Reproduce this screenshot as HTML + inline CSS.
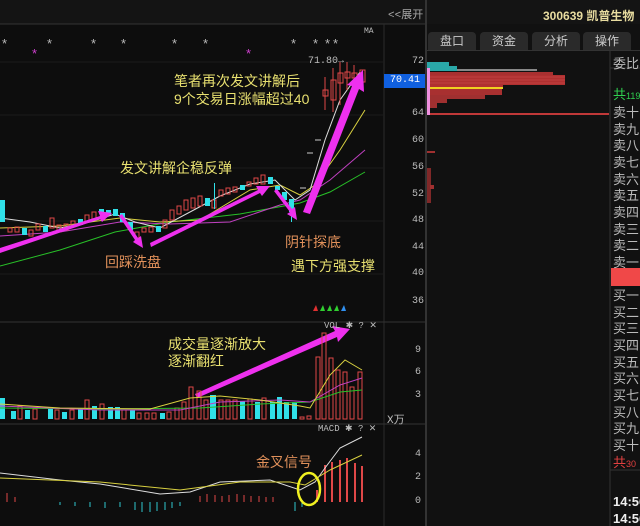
<!DOCTYPE html>
<html><head><meta charset="utf-8"><style>
body{margin:0;width:640px;height:526px;background:#0e0e0e;overflow:hidden;position:relative;font-family:"Liberation Sans","Noto Sans CJK SC",sans-serif}
.t{position:absolute;white-space:nowrap}
.y{color:#e8e070;font-size:14px}
.o{color:#e0905a;font-size:14px}
.ax{color:#bbb;font-size:10px;font-family:"Liberation Mono",monospace}
.r{color:#bbb;font-size:13px;left:613px}
.tab{position:absolute;top:32px;height:18px;width:48px;background:#2a2a2a;border-radius:4px 4px 0 0;color:#ccc;font-size:12px;text-align:center;line-height:18px}
</style></head><body>
<svg width="640" height="526" style="position:absolute;left:0;top:0">
<rect x="0" y="0" width="640" height="24" fill="#141414"/>
<rect x="0" y="24" width="425" height="502" fill="#0d0d0d"/>
<line x1="0" y1="24" x2="425" y2="24" stroke="#333"/>
<line x1="426" y1="0" x2="426" y2="526" stroke="#333" stroke-width="2"/>
<line x1="384" y1="24" x2="384" y2="526" stroke="#2a2a2a"/>
<line x1="0" y1="322" x2="425" y2="322" stroke="#333"/>
<line x1="0" y1="424" x2="425" y2="424" stroke="#333"/>
<g stroke="#1c1c1c">
<line x1="0" y1="62" x2="384" y2="62"/><line x1="0" y1="115" x2="384" y2="115"/><line x1="0" y1="168" x2="384" y2="168"/><line x1="0" y1="221" x2="384" y2="221"/><line x1="0" y1="274" x2="384" y2="274"/>
</g>
<rect x="427" y="24" width="213" height="502" fill="#111"/>
<rect x="427" y="50" width="213" height="1" fill="#333"/>
<line x1="610" y1="51" x2="610" y2="526" stroke="#333"/>
<line x1="610" y1="68" x2="640" y2="68" stroke="#333"/>
<line x1="610" y1="470" x2="640" y2="470" stroke="#333"/>
<rect x="611" y="268" width="29" height="18" fill="#f04848"/>
<rect x="427" y="62" width="22" height="4" fill="#2aa8a8"/>
<rect x="427" y="66" width="30" height="5" fill="#2aa8a8"/>
<rect x="457" y="69" width="80" height="2" fill="#888"/>
<rect x="427" y="72" width="126" height="3" fill="#a83030"/>
<rect x="427" y="75" width="138" height="10" fill="#b03030"/>
<g stroke="#d05050" stroke-width="0.5"><line x1="430" y1="77" x2="565" y2="77"/><line x1="430" y1="80" x2="565" y2="80"/><line x1="430" y1="83" x2="565" y2="83"/></g>
<rect x="427" y="85" width="76" height="2" fill="#b03030"/>
<rect x="427" y="87" width="76" height="2" fill="#f0d020"/>
<rect x="427" y="89" width="75" height="6" fill="#a83030"/>
<rect x="427" y="95" width="58" height="4" fill="#a03030"/>
<rect x="427" y="99" width="20" height="4" fill="#a03030"/>
<rect x="427" y="103" width="10" height="5" fill="#a03030"/>
<rect x="427" y="113" width="182" height="2" fill="#c03838"/>
<rect x="427" y="68" width="3" height="47" fill="#f090e0"/>
<rect x="427" y="151" width="8" height="2" fill="#a03030"/>
<rect x="427" y="168" width="4" height="35" fill="#802828"/>
<rect x="430" y="185" width="4" height="4" fill="#a03030"/>
<g fill="#bbb" font-size="13" font-family="Liberation Sans">
<text x="2" y="48">*</text><text x="47" y="48">*</text><text x="91" y="48">*</text><text x="121" y="48">*</text><text x="172" y="48">*</text><text x="203" y="48">*</text><text x="291" y="48">*</text><text x="313" y="48">*</text><text x="325" y="48">*</text><text x="333" y="48">*</text></g>
<g fill="#d040d0" font-size="13"><text x="32" y="58">*</text><text x="246" y="58">*</text></g>
<polyline fill="none" stroke="#28c028" stroke-width="1" points="0,266 60,250 115,232 170,222 240,214 300,203 330,192 365,172"/>
<polyline fill="none" stroke="#c040c0" stroke-width="1" points="0,236 60,232 120,222 170,224 230,222 280,205 300,200 330,180 365,150"/>
<polyline fill="none" stroke="#d8d040" stroke-width="1" points="0,228 60,226 120,218 160,222 200,220 250,190 280,185 300,195 315,185 340,150 365,110"/>
<polyline fill="none" stroke="#ddd" stroke-width="1" points="0,218 30,222 60,228 90,222 115,214 135,222 160,228 190,212 220,196 250,184 275,180 295,200 310,190 325,140 340,100 360,72"/>
<g stroke="#e04848" fill="none" stroke-width="1">
<rect x="8" y="228" width="4" height="4"/><rect x="15" y="227" width="4" height="5"/><rect x="29" y="230" width="4" height="6"/><rect x="36" y="224" width="4" height="6"/><rect x="50" y="218" width="4" height="10"/><rect x="57" y="225" width="4" height="7"/><rect x="64" y="224" width="4" height="6"/><rect x="71" y="221" width="4" height="5"/><rect x="85" y="215" width="4" height="7"/><rect x="92" y="212" width="4" height="8"/>
<rect x="135" y="232" width="4" height="6"/><rect x="142" y="228" width="4" height="4"/><rect x="149" y="227" width="4" height="5"/><rect x="163" y="220" width="4" height="8"/><rect x="170" y="210" width="4" height="10"/><rect x="177" y="206" width="4" height="8"/><rect x="184" y="200" width="4" height="10"/><rect x="191" y="198" width="4" height="10"/><rect x="198" y="196" width="4" height="10"/><rect x="212" y="200" width="4" height="8"/><rect x="219" y="190" width="4" height="6"/><rect x="226" y="188" width="4" height="6"/><rect x="233" y="187" width="4" height="5"/><rect x="247" y="182" width="4" height="4"/><rect x="254" y="178" width="4" height="6"/><rect x="261" y="175" width="4" height="9"/>
<rect x="323" y="90" width="5" height="6"/><rect x="331" y="80" width="5" height="20"/><rect x="338" y="73" width="5" height="10"/><rect x="345" y="72" width="5" height="6"/><rect x="352" y="73" width="5" height="5"/><rect x="360" y="70" width="5" height="12"/>
<line x1="325" y1="77" x2="325" y2="110"/><line x1="333" y1="68" x2="333" y2="112"/><line x1="340" y1="62" x2="340" y2="105"/><line x1="347" y1="62" x2="347" y2="90"/><line x1="354" y1="65" x2="354" y2="85"/>
<line x1="300" y1="188" x2="306" y2="188" stroke="#ccc"/><line x1="307" y1="153" x2="313" y2="153" stroke="#ccc"/><line x1="315" y1="140" x2="321" y2="140" stroke="#ccc"/>
</g>
<g fill="#30e0e8">
<rect x="0" y="200" width="5" height="22"/><rect x="22" y="228" width="5" height="7"/><rect x="43" y="226" width="5" height="6"/><rect x="78" y="219" width="5" height="6"/><rect x="99" y="209" width="5" height="5"/><rect x="106" y="210" width="5" height="5"/><rect x="113" y="209" width="5" height="7"/><rect x="120" y="213" width="5" height="9"/><rect x="128" y="222" width="5" height="8"/><rect x="156" y="226" width="5" height="6"/><rect x="205" y="198" width="5" height="8"/><rect x="240" y="185" width="5" height="5"/><rect x="268" y="177" width="5" height="7"/><rect x="275" y="186" width="5" height="4"/><rect x="282" y="192" width="5" height="8"/><rect x="289" y="199" width="5" height="13"/>
<rect x="291" y="199" width="1" height="23"/><rect x="214" y="183" width="1" height="26"/>
</g>
<g fill="#ee30ee">
<polygon points="0,248 100,216 98,211 112,213 102,222 100,219 0,253"/>
<polygon points="122,214 138,238 141,236 143,248 133,242 135,240 119,216"/>
<polygon points="150,243 258,190 256,186 270,186 262,196 260,193 151,247"/>
<polygon points="277,189 292,209 295,207 297,220 287,214 290,212 274,191"/>
<polygon points="303,212 352,86 347,85 363,70 364,92 359,89 310,214"/>
<polygon points="195,394 335,331 332,326 350,329 338,342 337,337 197,398"/>
</g>
<g>
<polygon points="313,311 316,305 318,311" fill="#e03030"/><polygon points="320,311 323,305 325,311" fill="#30d030"/><polygon points="327,311 330,305 332,311" fill="#30d030"/><polygon points="334,311 337,305 339,311" fill="#30d030"/><polygon points="341,311 344,305 346,311" fill="#3090f0"/></g>
<g fill="#30e0e8">
<rect x="0" y="398" width="5" height="21"/><rect x="11" y="411" width="5" height="8"/><rect x="25" y="410" width="5" height="9"/><rect x="48" y="408" width="5" height="11"/><rect x="62" y="412" width="5" height="7"/><rect x="78" y="409" width="5" height="10"/><rect x="92" y="406" width="5" height="13"/><rect x="108" y="407" width="5" height="12"/><rect x="115" y="407" width="5" height="12"/><rect x="130" y="410" width="5" height="9"/><rect x="160" y="413" width="5" height="6"/><rect x="210" y="395" width="6" height="24"/><rect x="240" y="401" width="5" height="18"/><rect x="255" y="402" width="5" height="17"/><rect x="270" y="402" width="5" height="17"/><rect x="277" y="397" width="5" height="22"/><rect x="284" y="402" width="5" height="17"/><rect x="292" y="402" width="5" height="17"/></g>
<g fill="none" stroke="#e04848">
<rect x="18" y="406" width="4" height="13"/><rect x="33" y="409" width="4" height="10"/><rect x="55" y="410" width="4" height="9"/><rect x="70" y="410" width="4" height="9"/><rect x="85" y="400" width="4" height="19"/><rect x="100" y="404" width="4" height="15"/><rect x="122" y="410" width="4" height="9"/><rect x="137" y="413" width="4" height="6"/><rect x="145" y="413" width="4" height="6"/><rect x="152" y="413" width="4" height="6"/><rect x="167" y="412" width="4" height="7"/><rect x="175" y="408" width="4" height="11"/><rect x="182" y="402" width="4" height="17"/><rect x="189" y="387" width="4" height="32"/><rect x="197" y="391" width="4" height="28"/><rect x="204" y="400" width="4" height="19"/><rect x="219" y="400" width="4" height="19"/><rect x="226" y="400" width="4" height="19"/><rect x="233" y="400" width="4" height="19"/><rect x="248" y="399" width="4" height="20"/><rect x="262" y="398" width="4" height="21"/><rect x="300" y="417" width="4" height="2"/><rect x="307" y="416" width="4" height="3"/>
<rect x="316" y="357" width="4" height="62"/><rect x="322" y="333" width="4" height="86"/><rect x="329" y="358" width="4" height="61"/><rect x="336" y="370" width="4" height="49"/><rect x="343" y="372" width="4" height="47"/><rect x="350" y="387" width="4" height="32"/><rect x="358" y="372" width="4" height="47"/></g>
<polyline fill="none" stroke="#28c028" points="0,408 100,409 200,408 260,404 310,402 340,392 362,390"/>
<polyline fill="none" stroke="#c040c0" points="0,406 100,410 180,410 220,402 280,400 310,402 340,385 362,378"/>
<polyline fill="none" stroke="#d8d040" points="0,404 60,408 150,409 190,398 220,396 260,400 300,406 310,408 330,375 345,360 362,370"/>
<g stroke="#e04848"><line x1="7" y1="502" x2="7" y2="493"/><line x1="15" y1="502" x2="15" y2="497"/><line x1="200" y1="502" x2="200" y2="496"/><line x1="207" y1="502" x2="207" y2="494"/><line x1="215" y1="502" x2="215" y2="495"/><line x1="222" y1="502" x2="222" y2="496"/><line x1="229" y1="502" x2="229" y2="495"/><line x1="237" y1="502" x2="237" y2="494"/><line x1="244" y1="502" x2="244" y2="495"/><line x1="251" y1="502" x2="251" y2="496"/><line x1="259" y1="502" x2="259" y2="496"/><line x1="266" y1="502" x2="266" y2="497"/><line x1="273" y1="502" x2="273" y2="497"/>
<line x1="317" y1="502" x2="317" y2="490" stroke-width="2"/><line x1="325" y1="502" x2="325" y2="465" stroke-width="2"/><line x1="332" y1="502" x2="332" y2="462" stroke-width="2"/><line x1="340" y1="502" x2="340" y2="460" stroke-width="2"/><line x1="347" y1="502" x2="347" y2="458" stroke-width="2"/><line x1="355" y1="502" x2="355" y2="463" stroke-width="2"/><line x1="362" y1="502" x2="362" y2="466" stroke-width="2"/></g>
<g stroke="#30c8d0"><line x1="60" y1="502" x2="60" y2="505"/><line x1="75" y1="502" x2="75" y2="506"/><line x1="90" y1="502" x2="90" y2="507"/><line x1="105" y1="502" x2="105" y2="508"/><line x1="120" y1="502" x2="120" y2="507"/><line x1="135" y1="502" x2="135" y2="510"/><line x1="142" y1="502" x2="142" y2="512"/><line x1="150" y1="502" x2="150" y2="512"/><line x1="157" y1="502" x2="157" y2="511"/><line x1="165" y1="502" x2="165" y2="510"/><line x1="172" y1="502" x2="172" y2="508"/><line x1="180" y1="502" x2="180" y2="506"/><line x1="295" y1="502" x2="295" y2="511"/><line x1="302" y1="502" x2="302" y2="507"/></g>
<polyline fill="none" stroke="#ddd" points="0,473 60,480 100,484 160,494 190,492 220,482 270,480 300,490 315,482 325,468 340,448 362,437"/>
<polyline fill="none" stroke="#d8d040" points="0,478 100,482 180,490 240,482 290,482 305,485 330,470 362,455"/>
<ellipse cx="309" cy="489" rx="11" ry="16" fill="none" stroke="#f0f020" stroke-width="2.5"/>
<rect x="384" y="74" width="41" height="14" fill="#1060e0"/>
</svg>
<div class="t ax" style="left:388px;top:6px;font-size:11px;color:#aaa">&lt;&lt;展开</div>
<div class="t" style="left:543px;top:7px;font-size:12px;font-weight:bold;color:#e8dca0">300639 凯普生物</div>
<div class="tab" style="left:428px">盘口</div><div class="tab" style="left:480px">资金</div><div class="tab" style="left:532px">分析</div><div class="tab" style="left:583px">操作</div>
<div class="t ax" style="left:364px;top:27px;font-size:8px">MA</div>
<div class="t ax" style="left:308px;top:56px">71.80→</div>
<div class="t ax" style="left:412px;top:56px">72</div>
<div class="t ax" style="left:390px;top:75px;color:#fff">70.41</div>
<div class="t ax" style="left:412px;top:108px">64</div>
<div class="t ax" style="left:412px;top:135px">60</div>
<div class="t ax" style="left:412px;top:162px">56</div>
<div class="t ax" style="left:412px;top:189px">52</div>
<div class="t ax" style="left:412px;top:215px">48</div>
<div class="t ax" style="left:412px;top:242px">44</div>
<div class="t ax" style="left:412px;top:268px">40</div>
<div class="t ax" style="left:412px;top:296px">36</div>
<div class="t ax" style="left:415px;top:345px">9</div>
<div class="t ax" style="left:415px;top:367px">6</div>
<div class="t ax" style="left:415px;top:390px">3</div>
<div class="t ax" style="left:387px;top:411px;font-size:11px">X万</div>
<div class="t ax" style="left:415px;top:449px">4</div>
<div class="t ax" style="left:415px;top:472px">2</div>
<div class="t ax" style="left:415px;top:496px">0</div>
<div class="t ax" style="left:324px;top:321px;font-size:9px">VOL ✱ ? ✕</div>
<div class="t ax" style="left:318px;top:424px;font-size:9px">MACD ✱ ? ✕</div>
<div class="t y" style="left:174px;top:71px">笔者再次发文讲解后</div>
<div class="t y" style="left:174px;top:89px">9个交易日涨幅超过40</div>
<div class="t y" style="left:120px;top:158px">发文讲解企稳反弹</div>
<div class="t o" style="left:105px;top:252px">回踩洗盘</div>
<div class="t o" style="left:285px;top:232px">阴针探底</div>
<div class="t y" style="left:291px;top:256px">遇下方强支撑</div>
<div class="t y" style="left:168px;top:334px">成交量逐渐放大</div>
<div class="t y" style="left:168px;top:351px">逐渐翻红</div>
<div class="t o" style="left:256px;top:452px">金叉信号</div>
<div class="t r" style="top:53px">委比</div>
<div class="t r" style="top:84px;color:#30d050">共<span style="font-size:9px">119</span></div>
<div class="t r" style="top:102px">卖十</div><div class="t r" style="top:119px">卖九</div><div class="t r" style="top:135px">卖八</div><div class="t r" style="top:152px">卖七</div><div class="t r" style="top:169px">卖六</div><div class="t r" style="top:185px">卖五</div><div class="t r" style="top:202px">卖四</div><div class="t r" style="top:219px">卖三</div><div class="t r" style="top:235px">卖二</div><div class="t r" style="top:252px">卖一</div>
<div class="t r" style="top:285px">买一</div><div class="t r" style="top:302px">买二</div><div class="t r" style="top:318px">买三</div><div class="t r" style="top:335px">买四</div><div class="t r" style="top:352px">买五</div><div class="t r" style="top:368px">买六</div><div class="t r" style="top:385px">买七</div><div class="t r" style="top:402px">买八</div><div class="t r" style="top:418px">买九</div><div class="t r" style="top:435px">买十</div>
<div class="t r" style="top:452px;color:#e04040">共<span style="font-size:9px">30</span></div>
<div class="t r" style="top:494px;color:#eee;font-weight:bold">14:56</div>
<div class="t r" style="top:511px;color:#eee;font-weight:bold">14:56</div>
</body></html>
